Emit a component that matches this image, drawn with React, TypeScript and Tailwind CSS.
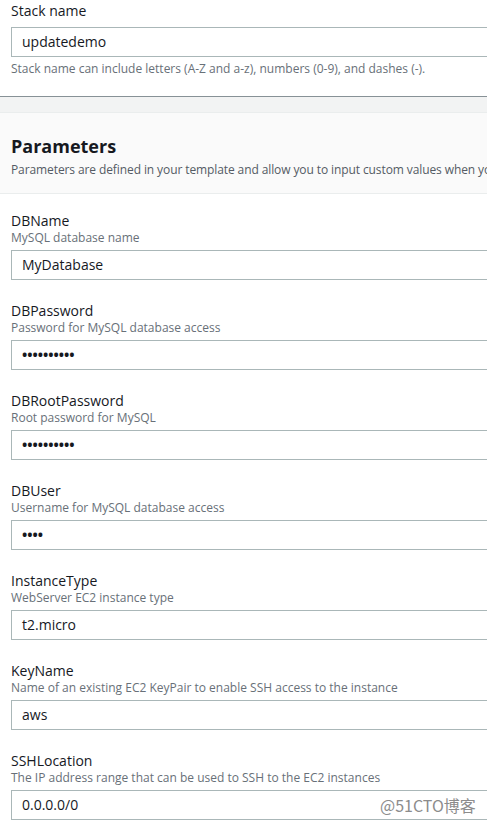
import React from "react";

const font = { fontFamily: '"Open Sans", "Noto Sans", Arial, sans-serif' };

type Field = { label: string; desc: string; value: string; password?: boolean };

const fields: Field[] = [
  { label: "DBName", desc: "MySQL database name", value: "MyDatabase" },
  { label: "DBPassword", desc: "Password for MySQL database access", value: "••••••••••", password: true },
  { label: "DBRootPassword", desc: "Root password for MySQL", value: "••••••••••", password: true },
  { label: "DBUser", desc: "Username for MySQL database access", value: "••••", password: true },
  { label: "InstanceType", desc: "WebServer EC2 instance type", value: "t2.micro" },
  { label: "KeyName", desc: "Name of an existing EC2 KeyPair to enable SSH access to the instance", value: "aws" },
  { label: "SSHLocation", desc: "The IP address range that can be used to SSH to the EC2 instances", value: "0.0.0.0/0" },
];

function Input({ value, password }: { value: string; password?: boolean }) {
  return (
    <div className="h-[30px] w-[600px] border border-[#aab7b8] bg-white pl-[10px] flex items-center">
      {password ? (
        <span className="text-[14px] text-[#16191f] leading-none font-bold">{value}</span>
      ) : (
        <span className="text-[14px] text-[#16191f] leading-none">{value}</span>
      )}
    </div>
  );
}

export default function App() {
  return (
    <div className="relative w-[487px] h-[822px] overflow-hidden bg-white" style={font}>
      <div className="px-[11px] pt-[2px] pb-[19px]">
        <div className="text-[14px] text-[#16191f] leading-[18px]">Stack name</div>
        <div className="mt-[7px]">
          <Input value="updatedemo" />
        </div>
        <div className="mt-[4px] text-[12px] text-[#687078] leading-[16px] whitespace-nowrap">
          Stack name can include letters (A-Z and a-z), numbers (0-9), and dashes (-).
        </div>
      </div>
      <div className="h-[17px] border-t border-[#879196] bg-[#f2f3f3] border-b border-b-[#eaeded]" />
      <div className="h-[81px] bg-[#fafafa] border-b border-[#eaeded] px-[11px] pt-[22px] overflow-hidden">
        <div className="text-[18px] font-bold text-[#16191f] leading-[22px]">Parameters</div>
        <div className="mt-[5px] text-[12px] tracking-[-0.1px] text-[#545b64] leading-[16px] whitespace-nowrap">
          Parameters are defined in your template and allow you to input custom values when you
        </div>
      </div>
      <div className="px-[11px] pt-[18px] flex flex-col gap-[22px]">
        {fields.map((f) => (
          <div key={f.label} className="flex flex-col">
            <div className="text-[14px] text-[#16191f] leading-[18px]">{f.label}</div>
            <div className="text-[12px] text-[#687078] leading-[16px] whitespace-nowrap">{f.desc}</div>
            <div className="mt-[4px]">
              <Input value={f.value} password={f.password} />
            </div>
          </div>
        ))}
      </div>
      <div
        className="absolute left-[380px] top-[794px] text-[16px] text-[#8c8c8c] leading-[22px]"
        style={{ fontFamily: '"Noto Sans CJK SC", "Noto Sans", sans-serif' }}
      >
        @51CTO博客
      </div>
    </div>
  );
}
